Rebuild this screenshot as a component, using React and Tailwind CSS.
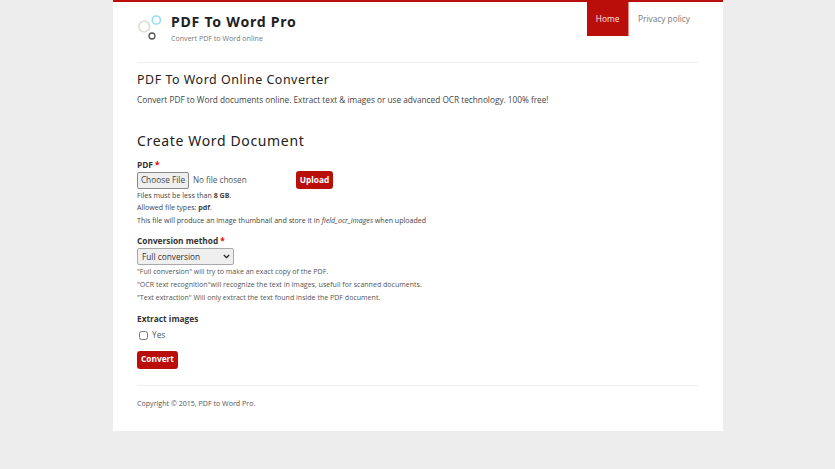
export default function App() {
  return (
    <div className="min-h-[469px] bg-[#ededed] font-['Open_Sans',sans-serif] text-[#444]">
      <div className="mx-auto w-[610px] h-[431px] bg-white border-t-2 border-[#b90e0a] px-[24.5px]">
        <header className="flex justify-between h-[61px] border-b border-[#eee]">
          <div className="flex items-start pt-[10px]">
            <svg width="26" height="28" viewBox="0 0 26 28" className="mt-[3px] shrink-0" fill="none">
              <circle cx="7.2" cy="11.6" r="5.4" stroke="#dedfd5" strokeWidth="1.7" />
              <circle cx="19.3" cy="5" r="4.1" stroke="#8fdcf5" strokeWidth="1.5" />
              <circle cx="15" cy="21" r="3" stroke="#555" strokeWidth="1.3" />
            </svg>
            <div className="ml-[8px]">
              <div className="font-['Noto_Sans',sans-serif] text-[14.1px] leading-[20px] font-bold tracking-[0.75px] text-[#222]">PDF To Word Pro</div>
              <div className="text-[7.1px] leading-[10px] mt-[1px] text-[#777]">Convert PDF to Word online</div>
            </div>
          </div>
          <nav className="flex h-[34px] text-[8.3px]">
            <a className="w-[42px] bg-[#b90e0a] text-[#fbe9e9] flex items-center justify-center border-r border-[#e58a88]">Home</a>
            <a className="pl-[9px] pr-[8px] text-[#777] flex items-center">Privacy policy</a>
          </nav>
        </header>

        <h2 className="font-['Noto_Sans',sans-serif] text-[12.4px] leading-[18px] tracking-[0.55px] text-[#222] mt-[8px]">PDF To Word Online Converter</h2>
        <p className="text-[8.25px] leading-[12px] mt-[5px] text-[#444]">Convert PDF to Word documents online. Extract text &amp; images or use advanced OCR technology. 100% free!</p>

        <h2 className="font-['Noto_Sans',sans-serif] text-[14px] leading-[20px] tracking-[0.65px] text-[#222] mt-[25px]">Create Word Document</h2>

        <div className="mt-[6px]">
          <div className="text-[8.3px] leading-[12px] font-bold text-[#333] mt-[8px]">PDF <span className="text-[#e00]">*</span></div>
          <div className="flex items-center h-[18px]">
            <input type="file" className="w-[159px] text-[8.1px] text-[#555] file:text-[8.3px] file:text-[#444] file:bg-[#efefef] file:border file:border-[#8a8a8a] file:rounded-[2px] file:h-[17px] file:w-[52px] file:px-0 file:mr-[4px]" />
            <button className="h-[18px] w-[37px] rounded-[3px] bg-[#b90e0a] text-white text-[8.3px] font-bold">Upload</button>
          </div>
          <div className="text-[7.1px] leading-[12.5px] -mt-[0.5px] text-[#444]">
            <div>Files must be less than <b>8 GB</b>.</div>
            <div>Allowed file types: <b>pdf</b>.</div>
            <div>This file will produce an image thumbnail and store it in <i>field_ocr_images</i> when uploaded</div>
          </div>
        </div>

        <div className="mt-[9px]">
          <div className="text-[8.3px] leading-[12px] font-bold text-[#333]">Conversion method <span className="text-[#e00]">*</span></div>
          <div className="relative w-[97px] mt-[1px]">
            <select defaultValue="Full conversion" className="block appearance-none w-[97px] h-[17px] rounded-[2px] border border-[#a8a8a8] bg-[#efefef] text-[8.3px] text-[#333] pl-[4px] pt-[1px]">
              <option>Full conversion</option>
              <option>OCR text recognition</option>
              <option>Text extraction</option>
            </select>
            <svg width="7" height="5" viewBox="0 0 7 5" fill="none" className="absolute right-[4px] top-[6px] pointer-events-none">
              <path d="M0.8 1 L3.5 3.7 L6.2 1" stroke="#222" strokeWidth="1.3" />
            </svg>
          </div>
          <div className="text-[7.05px] leading-[13px] -mt-[0.5px] text-[#555]">
            <div>"Full conversion" will try to make an exact copy of the PDF.</div>
            <div>"OCR text recognition"will recognize the text in images, usefull for scanned documents.</div>
            <div>"Text extraction" Will only extract the text found inside the PDF document.</div>
          </div>
        </div>

        <div className="mt-[9px]">
          <div className="text-[8.3px] leading-[12px] font-bold text-[#333]">Extract images</div>
          <label className="flex items-center mt-[5px] ml-[2px] h-[12px] text-[8.3px] text-[#555]">
            <input type="checkbox" className="w-[9px] h-[9px] mr-[4px]" />
            Yes
          </label>
        </div>

        <button className="block mt-[9px] h-[18px] w-[41px] rounded-[3px] bg-[#b90e0a] text-white text-[8.3px] font-bold">Convert</button>

        <footer className="mt-[16px] border-t border-[#eee] pt-[12px] text-[7.1px] leading-[10px] text-[#555]">Copyright © 2015, PDF to Word Pro.</footer>
      </div>
    </div>
  );
}
